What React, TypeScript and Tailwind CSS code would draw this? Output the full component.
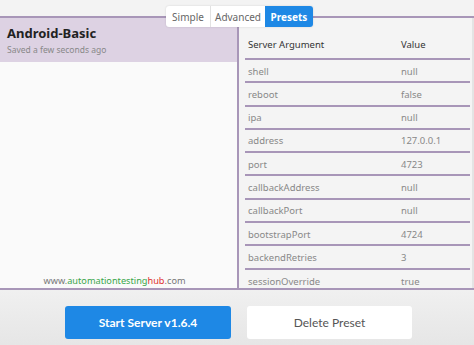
import React from "react";

const rows: [string, string][] = [
  ["shell", "null"],
  ["reboot", "false"],
  ["ipa", "null"],
  ["address", "127.0.0.1"],
  ["port", "4723"],
  ["callbackAddress", "null"],
  ["callbackPort", "null"],
  ["bootstrapPort", "4724"],
  ["backendRetries", "3"],
  ["sessionOverride", "true"],
];

export default function App() {
  return (
    <div
      className="w-[474px] h-[345px] bg-[#efefef] flex flex-col relative overflow-hidden"
      style={{ fontFamily: "'Noto Sans', 'Open Sans', sans-serif" }}
    >
      <div className="h-[18px] bg-[#f3f3f3] border-b-2 border-[#a896b8] shrink-0" />
      <div className="absolute left-[166px] top-[6px] h-[21px] flex bg-white rounded-[3px] shadow-[0_0_2px_rgba(0,0,0,0.15)] text-[10px] leading-none z-10">
        <div className="w-[45px] flex items-center justify-center text-[#666] border-r border-[#e2e2e2]">Simple</div>
        <div className="w-[54px] flex items-center justify-center text-[#666]">Advanced</div>
        <div className="w-[48px] flex items-center justify-center text-white font-bold bg-[#1e88e5] rounded-r-[3px]">Presets</div>
      </div>
      <div className="h-[272px] flex border-b-2 border-[#a896b8] shrink-0">
        <div className="w-[237px] bg-[#fafafa] flex flex-col">
          <div className="h-[44px] bg-[#ddd2e3] px-[7px] pt-[7px]">
            <div className="text-[13px] font-bold text-[#222] leading-[16px]">Android-Basic</div>
            <div className="text-[8.5px] text-[#888] leading-[16px] mt-[1px]">Saved a few seconds ago</div>
          </div>
          <div className="flex-1" />
          <div className="text-[9.2px] text-center pr-[8px] leading-[14px] text-[#777]">
            www.<span className="text-[#3aa64a]">automationtesting</span>
            <span className="text-[#e0312f]">hub</span>.com
          </div>
        </div>
        <div className="w-[2px] bg-[#a896b8]" />
        <div className="flex-1 bg-[#f4f4f4] pl-[6px] pr-[2px] flex flex-col">
          <div className="flex-1 flex flex-col">
            <div className="h-[42px] flex items-end pb-[6px] border-b-2 border-[#a896b8] text-[9.5px] text-[#333]">
              <div className="w-[156px] pl-[3px]">Server Argument</div>
              <div>Value</div>
            </div>
            {rows.map(([k, v], i) => (
              <div
                key={k}
                className={
                  "h-[23.3px] flex items-center pt-[2px] text-[9.5px] text-[#888] " +
                  (i < rows.length - 1 ? "border-b-2 border-[#a896b8]" : "")
                }
              >
                <div className="w-[156px] pl-[3px]">{k}</div>
                <div>{v}</div>
              </div>
            ))}
          </div>
        </div>
        <div className="w-[2px] bg-[#e4e4e4]" />
      </div>
      <div
        className="flex-1 flex items-start pt-[16px] pl-[65px] gap-[16px] bg-gradient-to-b from-[#f0f0f0] to-[#e6e6e6]"
        style={{ fontFamily: "Lato, 'Noto Sans', sans-serif" }}
      >
        <div className="w-[166px] h-[33px] bg-[#1e88e5] rounded-[3px] flex items-center justify-center text-white font-bold text-[12px]">
          Start Server v1.6.4
        </div>
        <div className="w-[165px] h-[33px] bg-white rounded-[3px] flex items-center justify-center text-[#555] text-[12px]">
          Delete Preset
        </div>
      </div>
    </div>
  );
}
